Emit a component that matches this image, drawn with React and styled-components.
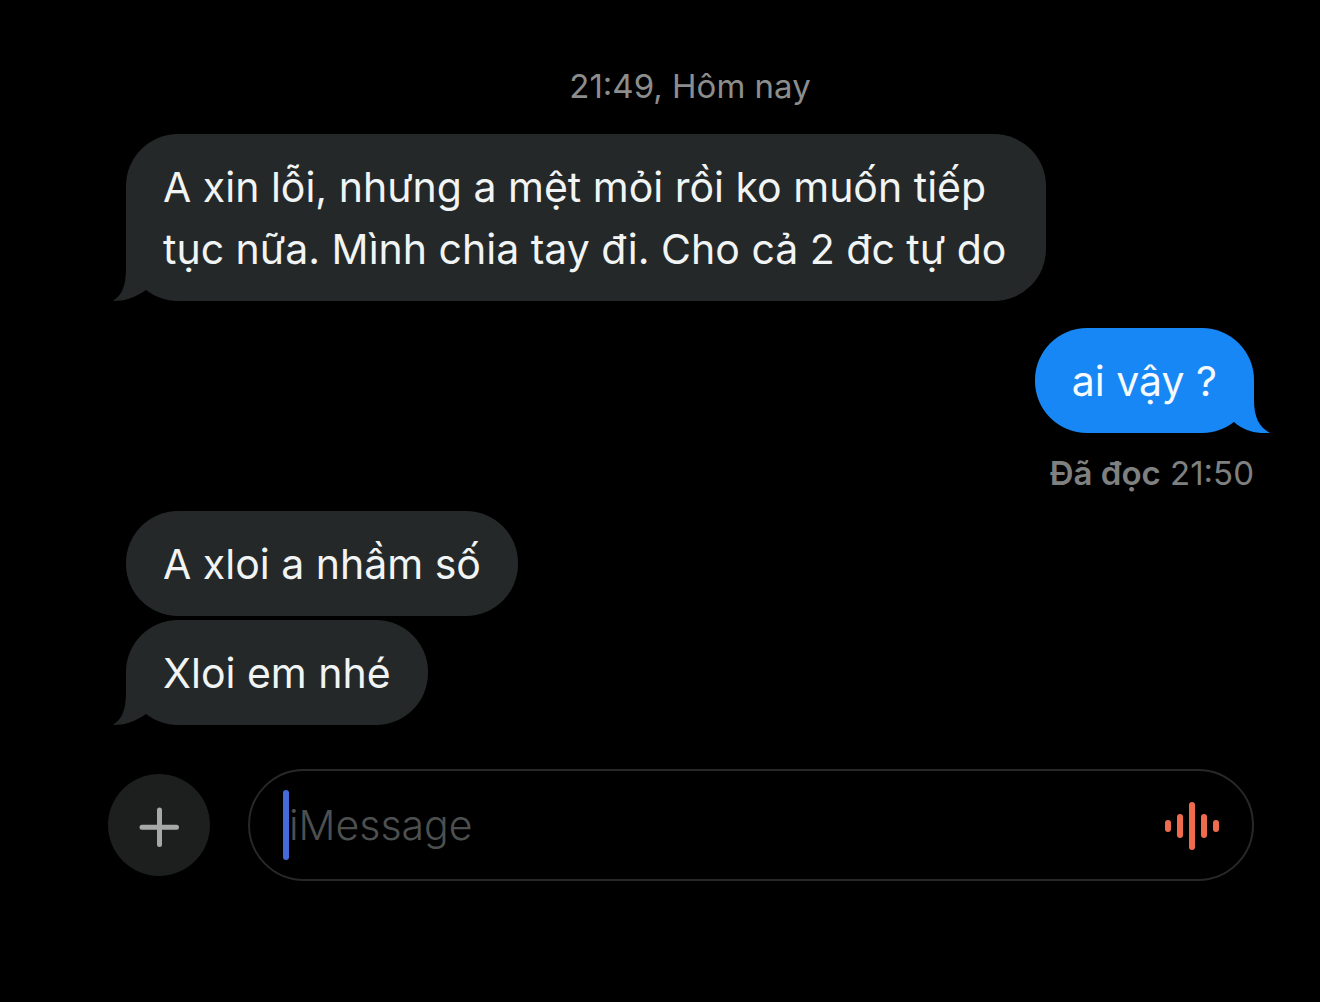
import styled, { createGlobalStyle } from "styled-components";

const GlobalStyle = createGlobalStyle`
  * {
    box-sizing: border-box;
  }
  body {
    margin: 0;
    background: #000;
    color: #f1f4f4;
    font-family: Inter, "Noto Sans", sans-serif;
  }
`;

const Page = styled.main`
  min-height: 100vh;
  padding: 66px 66px 120px 108px;
`;

const Thread = styled.section`
  display: flex;
  flex-direction: column;
  padding-left: 18px;
`;

const DateLabel = styled.time`
  align-self: center;
  margin-bottom: 28px;
  color: #8c8d8d;
  font-size: 33px;
  line-height: 40px;
`;

const Group = styled.div`
  display: flex;
  flex-direction: column;
  align-items: ${(props) => (props.$mine ? "flex-end" : "flex-start")};
  gap: 4px;
`;

const Bubble = styled.p`
  position: relative;
  max-width: min(82%, 920px);
  margin: 0;
  padding: 22px 37px 21px;
  border-radius: 52px;
  background: ${(props) => (props.$mine ? "#1687f5" : "#252828")};
  color: ${(props) => (props.$mine ? "#f4faff" : "#f1f4f4")};
  font-size: 41px;
  line-height: 62px;
`;

const TailSvg = styled.svg`
  position: absolute;
  bottom: 0;
  ${(props) => (props.$mine ? "right: -16px;" : "left: -14px;")}
  width: 50px;
  height: 53px;
  fill: ${(props) => (props.$mine ? "#1687f5" : "#252828")};
`;

const Receipt = styled.p`
  align-self: flex-end;
  margin: 20px 0 18px;
  color: #7f8080;
  font-size: 33px;
  line-height: 40px;
`;

const ReceiptStatus = styled.b`
  font-weight: 600;
`;

const Reply = styled(Group)`
  margin-top: 27px;
`;

const Composer = styled.form`
  display: flex;
  align-items: center;
  gap: 38px;
  margin-top: 44px;
`;

const RoundButton = styled.button`
  display: flex;
  flex: none;
  align-items: center;
  justify-content: center;
  width: 102px;
  height: 102px;
  padding: 0;
  border: 0;
  border-radius: 50%;
  background: #1c1f1e;
  color: #a6a9a8;
`;

const Field = styled.div`
  display: flex;
  flex: 1;
  align-items: center;
  min-width: 0;
  height: 112px;
  padding: 0 32px 0 33px;
  border: 2px solid #272828;
  border-radius: 56px;
`;

const Caret = styled.span`
  flex: none;
  width: 6px;
  height: 70px;
  border-radius: 3px;
  background: #456ad9;
`;

const TextInput = styled.input`
  flex: 1;
  min-width: 0;
  height: 62px;
  padding: 0;
  border: 0;
  outline: 0;
  background: transparent;
  color: #f1f4f4;
  font: 300 41px Inter, "Noto Sans", sans-serif;
  &::placeholder {
    color: #4d5050;
    opacity: 1;
  }
`;

const VoiceButton = styled.button`
  display: flex;
  flex: none;
  padding: 0;
  border: 0;
  background: transparent;
  color: #ee6c4d;
`;

const Tail = ({ mine }) => (
  <TailSvg $mine={mine} viewBox="0 0 50 53" aria-hidden="true">
    {mine ? (
      <path d="M34 0V20C34 37 39 47 50 53C37 54 24 51 14 42L0 30V0Z" />
    ) : (
      <path d="M14 0V20C14 38 10 47 1 53C12 53 23 50 34 42L50 30V0Z" />
    )}
  </TailSvg>
);

const Message = ({ mine, tail, children }) => (
  <Bubble $mine={mine}>
    {tail && <Tail mine={mine} />}
    {children}
  </Bubble>
);

const PlusIcon = () => (
  <svg width="40" height="44" viewBox="0 0 40 44" aria-hidden="true">
    <path
      d="M20.500 7V41.500M3 24.300H37.500"
      stroke="currentColor"
      strokeWidth="5"
      strokeLinecap="round"
    />
  </svg>
);

const WaveIcon = () => (
  <svg width="56" height="52" viewBox="0 0 56 52" aria-hidden="true">
    <path
      d="M4 24V30M16 18V36M28 6V48M40 18V36M52 24V30"
      stroke="currentColor"
      strokeWidth="6"
      strokeLinecap="round"
    />
  </svg>
);

export default () => (
  <Page>
    <GlobalStyle />
    <Thread>
      <DateLabel>21:49, Hôm nay</DateLabel>
      <Group>
        <Message tail>
          A xin lỗi, nhưng a mệt mỏi rồi ko muốn tiếp tục nữa. Mình chia tay đi.
          Cho cả 2 đc tự do
        </Message>
      </Group>
      <Reply $mine>
        <Message mine tail>
          ai vậy ?
        </Message>
      </Reply>
      <Receipt>
        <ReceiptStatus>Đã đọc</ReceiptStatus> 21:50
      </Receipt>
      <Group>
        <Message>A xloi a nhầm số</Message>
        <Message tail>Xloi em nhé</Message>
      </Group>
    </Thread>
    <Composer onSubmit={(e) => e.preventDefault()}>
      <RoundButton type="button" aria-label="Thêm">
        <PlusIcon />
      </RoundButton>
      <Field>
        <Caret />
        <TextInput type="text" placeholder="iMessage" aria-label="iMessage" />
        <VoiceButton type="button" aria-label="Ghi âm">
          <WaveIcon />
        </VoiceButton>
      </Field>
    </Composer>
  </Page>
);
